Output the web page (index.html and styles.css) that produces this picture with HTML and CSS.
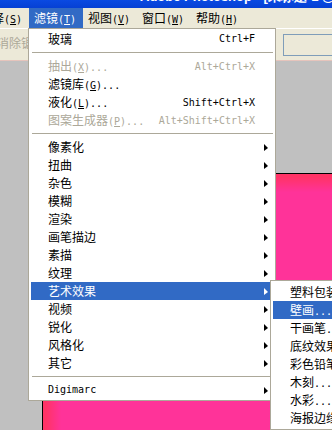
FILE: index.html
```html
<!DOCTYPE html>
<html>
<head>
<meta charset="utf-8">
<link rel="stylesheet" href="styles.css">
</head>
<body>
<div class="title"><span>Adobe Photoshop - [未标题-1 @ 100% (图层 1, RGB)]</span></div>
<div class="menubar">
  <div class="mb">选择<span class="l">(<u>S</u>)</span></div>
  <div class="mb on">滤镜<span class="l">(<u>T</u>)</span></div>
  <div class="mb">视图<span class="l">(<u>V</u>)</span></div>
  <div class="mb">窗口<span class="l">(<u>W</u>)</span></div>
  <div class="mb">帮助<span class="l">(<u>H</u>)</span></div>
</div>
<div class="toolbar">
  <span class="opt">消除锯齿</span>
  <div class="field"></div>
</div>
<div class="area">
  <div class="canvas"></div>
</div>

<div class="menu">
  <div class="item"><span>玻璃</span><span class="key">Ctrl+F</span><span></span></div>
  <div class="sep"></div>
  <div class="item dis"><span>抽出<span class="l">(<u>X</u>)...</span></span><span class="key">Alt+Ctrl+X</span><span></span></div>
  <div class="item"><span>滤镜库<span class="l">(<u>G</u>)...</span></span><span class="key"></span><span></span></div>
  <div class="item"><span>液化<span class="l">(<u>L</u>)...</span></span><span class="key">Shift+Ctrl+X</span><span></span></div>
  <div class="item dis"><span>图案生成器<span class="l">(<u>P</u>)...</span></span><span class="key">Alt+Shift+Ctrl+X</span><span></span></div>
  <div class="sep"></div>
  <div class="item"><span>像素化</span><span></span><span class="arrow"></span></div>
  <div class="item"><span>扭曲</span><span></span><span class="arrow"></span></div>
  <div class="item"><span>杂色</span><span></span><span class="arrow"></span></div>
  <div class="item"><span>模糊</span><span></span><span class="arrow"></span></div>
  <div class="item"><span>渲染</span><span></span><span class="arrow"></span></div>
  <div class="item"><span>画笔描边</span><span></span><span class="arrow"></span></div>
  <div class="item"><span>素描</span><span></span><span class="arrow"></span></div>
  <div class="item"><span>纹理</span><span></span><span class="arrow"></span></div>
  <div class="item on"><span>艺术效果</span><span></span><span class="arrow"></span></div>
  <div class="item"><span>视频</span><span></span><span class="arrow"></span></div>
  <div class="item"><span>锐化</span><span></span><span class="arrow"></span></div>
  <div class="item"><span>风格化</span><span></span><span class="arrow"></span></div>
  <div class="item"><span>其它</span><span></span><span class="arrow"></span></div>
  <div class="sep"></div>
  <div class="item"><span class="l">Digimarc</span><span></span><span class="arrow"></span></div>
</div>

<div class="submenu">
  <div class="sitem">塑料包装<span class="l">...</span></div>
  <div class="sitem on">壁画<span class="l">...</span></div>
  <div class="sitem">干画笔<span class="l">...</span></div>
  <div class="sitem">底纹效果<span class="l">...</span></div>
  <div class="sitem">彩色铅笔<span class="l">...</span></div>
  <div class="sitem">木刻<span class="l">...</span></div>
  <div class="sitem">水彩<span class="l">...</span></div>
  <div class="sitem">海报边缘<span class="l">...</span></div>
</div>
</body>
</html>
```

FILE: styles.css
```css
html, body {
  margin: 0;
  padding: 0;
}
body {
  width: 332px;
  height: 430px;
  overflow: hidden;
  position: relative;
  background: #C0C0C0;
  font-family: "Noto Sans CJK SC", sans-serif;
  font-size: 12px;
  color: #000;
}
.l {
  font-family: "DejaVu Sans Mono", monospace;
  font-size: 10px;
}
.title {
  height: 8px;
  background: linear-gradient(#0A4AE2, #0640D4);
  overflow: hidden;
  color: #fff;
  font-family: "Liberation Sans", sans-serif;
  font-weight: bold;
  font-size: 13px;
  line-height: 13px;
  white-space: nowrap;
}
.title span {
  display: block;
  margin-top: -10px;
  padding-left: 140px;
}
.menubar {
  height: 20px;
  background: #ECE9D8;
  display: flex;
  margin-left: -25px;
}
.mb {
  flex: none;
  width: 54px;
  box-sizing: border-box;
  padding-left: 5px;
  line-height: 20px;
  white-space: nowrap;
}
.mb.on {
  background: #316AC5;
  color: #fff;
}
.toolbar {
  height: 32px;
  box-sizing: border-box;
  background: #ECE9D8;
  border-top: 1px solid #fff;
  display: flex;
  align-items: flex-start;
  overflow: hidden;
}
.opt {
  flex: none;
  width: 286px;
  margin-left: -3px;
  margin-top: 5px;
  line-height: 18px;
  color: #ACA899;
}
.field {
  flex: none;
  width: 80px;
  height: 22px;
  margin-top: 5px;
  box-sizing: border-box;
  border: 1px solid #7F9DB9;
}
.area {
  height: 400px;
  border-top: 1px solid #E6C4BC;
  background: #C0C0C0;
  padding-left: 42px;
  padding-top: 112px;
}
.canvas {
  height: 300px;
  border-top: 1px solid #000;
  border-left: 1px solid #000;
  background:
    linear-gradient(to bottom, #FF3366 0, #FF3366 3px, rgba(255, 51, 102, 0) 18px),
    linear-gradient(to right, #FF3366 0, #FF3366 3px, rgba(255, 51, 102, 0) 18px),
    #FF3399;
}
.menu {
  position: absolute;
  left: 28px;
  top: 28px;
  width: 248px;
  box-sizing: border-box;
  border: 1px solid #ACA899;
  background: #fff;
  padding: 1px 2px;
}
.item {
  display: grid;
  grid-template-columns: 1fr auto 18px;
  align-items: center;
  height: 18px;
  line-height: 18px;
  padding-left: 17px;
  white-space: nowrap;
}
.item.dis {
  color: #ACA899;
}
.item.on {
  background: #316AC5;
  color: #fff;
}
.key {
  font-family: "DejaVu Sans Mono", monospace;
  font-size: 10px;
}
.arrow {
  width: 0;
  height: 0;
  margin-left: 9px;
  border-left: 4px solid currentColor;
  border-top: 4px solid transparent;
  border-bottom: 3px solid transparent;
}
.sep {
  height: 9px;
  display: flex;
  align-items: center;
}
.sep::before {
  content: "";
  flex: 1;
  height: 1px;
  margin-left: 1px;
  background: #ACA899;
}
.submenu {
  position: absolute;
  left: 270px;
  top: 280px;
  width: 100px;
  border: 1px solid #ACA899;
  border-right: none;
  background: #fff;
  padding: 2px 0 2px 2px;
}
.sitem {
  height: 18px;
  line-height: 18px;
  padding-left: 17px;
  white-space: nowrap;
}
.sitem.on {
  background: #316AC5;
  color: #fff;
}
```
